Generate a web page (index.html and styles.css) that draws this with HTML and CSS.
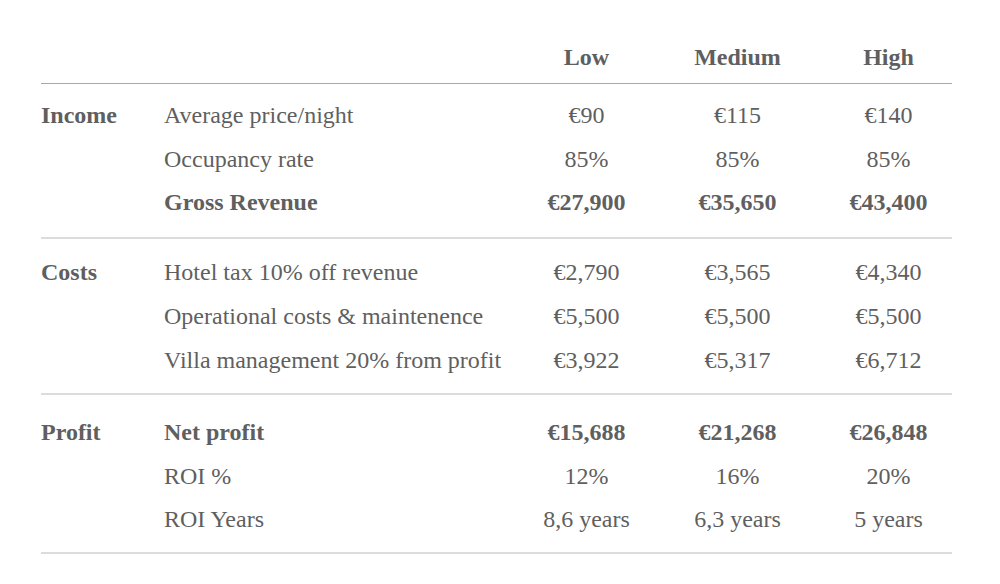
FILE: index.html
```html
<!DOCTYPE html>
<html>
<head>
<meta charset="utf-8">
<link rel="stylesheet" href="styles.css">
</head>
<body>
<div class="table">
  <div class="head">
    <div></div><div></div>
    <div class="num">Low</div><div class="num">Medium</div><div class="num last">High</div>
  </div>
  <div class="section income">
    <div class="cat">Income</div>
    <div class="row"><div class="item">Average price/night</div><div class="num">€90</div><div class="num">€115</div><div class="num last">€140</div></div>
    <div class="row"><div class="item">Occupancy rate</div><div class="num">85%</div><div class="num">85%</div><div class="num last">85%</div></div>
    <div class="row bold short"><div class="item">Gross Revenue</div><div class="num">€27,900</div><div class="num">€35,650</div><div class="num last">€43,400</div></div>
  </div>
  <div class="section costs">
    <div class="cat">Costs</div>
    <div class="row"><div class="item">Hotel tax 10% off revenue</div><div class="num">€2,790</div><div class="num">€3,565</div><div class="num last">€4,340</div></div>
    <div class="row"><div class="item">Operational costs &amp; maintenence</div><div class="num">€5,500</div><div class="num">€5,500</div><div class="num last">€5,500</div></div>
    <div class="row"><div class="item">Villa management 20% from profit</div><div class="num">€3,922</div><div class="num">€5,317</div><div class="num last">€6,712</div></div>
  </div>
  <div class="section profit">
    <div class="cat">Profit</div>
    <div class="row bold"><div class="item">Net profit</div><div class="num">€15,688</div><div class="num">€21,268</div><div class="num last">€26,848</div></div>
    <div class="row"><div class="item">ROI %</div><div class="num">12%</div><div class="num">16%</div><div class="num last">20%</div></div>
    <div class="row short"><div class="item">ROI Years</div><div class="num">8,6 years</div><div class="num">6,3 years</div><div class="num last">5 years</div></div>
  </div>
</div>
</body>
</html>
```
FILE: styles.css
```css
html, body {
  margin: 0;
  padding: 0;
  background: #ffffff;
}
body {
  font-family: "Liberation Serif", "DejaVu Serif", serif;
  font-size: 24px;
  color: #5f5f5f;
}
.table {
  width: 911px;
  margin-left: 41px;
  padding-top: 35px;
}
.head {
  display: grid;
  grid-template-columns: 123px 347px 151px 151px 139px;
  height: 48px;
  line-height: 44px;
  font-weight: bold;
  border-bottom: 1px solid #a9a9a9;
}
.num {
  text-align: center;
}
.num.last {
  padding-left: 12px;
}
.section {
  display: grid;
  grid-template-columns: 123px 1fr;
  border-bottom: 2px solid #dcdcdc;
}
.section.income {
  padding: 9px 0 14px;
}
.section.costs {
  padding: 11px 0 11px;
}
.section.profit {
  padding: 15px 0 12px;
}
.cat {
  font-weight: bold;
  line-height: 44px;
}
.row {
  grid-column: 2;
  display: grid;
  grid-template-columns: 347px 151px 151px 139px;
  line-height: 44px;
}
.row.short {
  line-height: 42px;
}
.cat + .row {
  grid-row: 1;
}
.row.bold {
  font-weight: bold;
}
```
